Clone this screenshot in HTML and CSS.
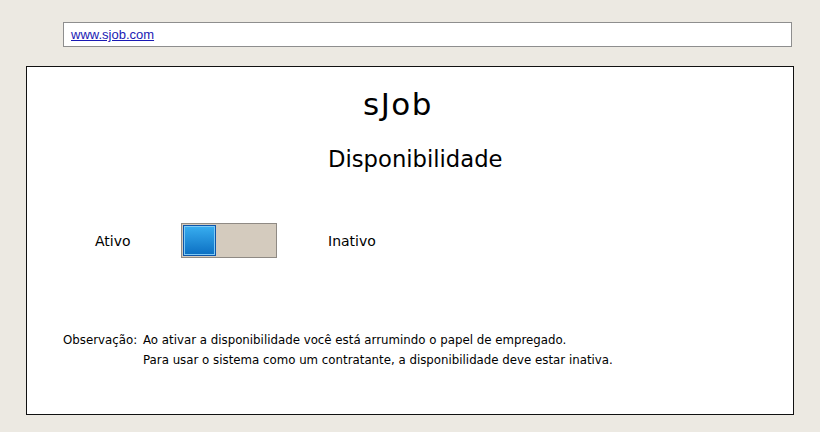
FILE: index.html
```html
<!DOCTYPE html>
<html lang="pt">
<head>
<meta charset="utf-8">
<title>sJob - Disponibilidade</title>
<link rel="stylesheet" href="styles.css">
</head>
<body>
<div class="urlbar"><a href="#" class="url">www.sjob.com</a></div>
<main class="panel">
  <h1 class="brand">sJob</h1>
  <h2 class="title">Disponibilidade</h2>
  <div class="switch-row">
    <span class="label-on">Ativo</span>
    <div class="toggle"><div class="thumb"></div></div>
    <span class="label-off">Inativo</span>
  </div>
  <div class="note">
    <span class="note-key">Observação:</span>
    <div class="note-lines">
      <p>Ao ativar a disponibilidade você está arrumindo o papel de empregado.</p>
      <p>Para usar o sistema como um contratante, a disponibilidade deve estar inativa.</p>
    </div>
  </div>
</main>
</body>
</html>
```
FILE: styles.css
```css
* { box-sizing: border-box; }
html, body { margin: 0; padding: 0; }
body {
  width: 820px;
  height: 432px;
  background: #ece9e2;
  font-family: "DejaVu Sans", sans-serif;
  color: #000;
  padding: 22px 27px 0 26px;
  overflow: hidden;
}
.urlbar {
  margin: 0 0 0 37px;
  width: 729px;
  height: 25px;
  background: #fff;
  border: 1px solid #8e8e8e;
  padding: 5px 0 0 7px;
  font-family: "Liberation Sans", sans-serif;
  font-size: 13px;
  line-height: 14px;
}
.url { color: #1a1ab4; text-decoration: underline; }
.panel {
  margin-top: 19px;
  width: 768px;
  height: 349px;
  background: #fff;
  border: 1px solid #111;
  display: flex;
  flex-direction: column;
  align-items: stretch;
}
.brand {
  margin: 19px 0 0 336px;
  font-size: 31px;
  font-weight: normal;
  letter-spacing: 1.5px;
  line-height: 36px;
}
.title {
  margin: 23px 0 0 301px;
  font-size: 22.7px;
  font-weight: normal;
  line-height: 28px;
}
.switch-row {
  margin-top: 50px;
  display: flex;
  align-items: center;
  font-size: 14px;
}
.label-on { margin-left: 68px; width: 86px; }
.toggle {
  width: 96px;
  height: 35px;
  background: #d4cbbe;
  border: 1px solid #8f8a84;
  padding: 1px;
}
.thumb {
  width: 33px;
  height: 31px;
  background: linear-gradient(#38aef0, #0c6fc2);
  border: 1px solid #0d55a8;
  box-shadow: inset 0 0 0 1px #7ec9f5;
}
.label-off { margin-left: 51px; }
.note {
  margin: 72px 0 0 36px;
  display: flex;
  font-size: 11.8px;
  line-height: 20px;
}
.note-key { width: 80px; }
.note-lines p { margin: 0; }
```
